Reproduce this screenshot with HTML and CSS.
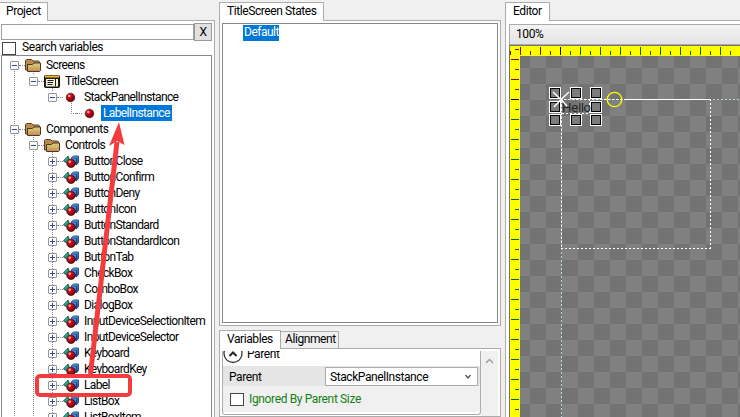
FILE: index.html
```html
<!DOCTYPE html>
<html lang="en">
<head>
<meta charset="utf-8">
<title>Project</title>
<link rel="stylesheet" href="styles.css">
</head>
<body>
<svg class="defs" width="0" height="0">
  <defs>
    <linearGradient id="fold" x1="0" y1="0" x2="0" y2="1"><stop offset="0" stop-color="#dccb7c"/><stop offset=".5" stop-color="#cdb866"/><stop offset=".6" stop-color="#d3a270"/><stop offset="1" stop-color="#c08f58"/></linearGradient>
    <radialGradient id="red" cx=".35" cy=".3" r=".75"><stop offset="0" stop-color="#ff8a8a"/><stop offset=".3" stop-color="#cb1016"/><stop offset="1" stop-color="#690008"/></radialGradient>
    <linearGradient id="blue" x1="0" y1="0" x2="1" y2="1"><stop offset="0" stop-color="#7cc4ff"/><stop offset="1" stop-color="#0b4bb0"/></linearGradient>
  </defs>
  <symbol id="folder" viewBox="0 0 16 16"><path d="M.5 13V3.500L1.500 2.500H6.500L8 4H13.500L14.500 5V13Z" fill="#b98b50" stroke="#5b4120"/><path d="M2.500 14.500V7.500H7.500L9 6H15.500V13.500L14.500 14.500Z" fill="url(#fold)" stroke="#4d371b"/></symbol>
  <symbol id="screen" viewBox="0 0 16 16"><rect x=".5" y="2.500" width="15" height="12" rx="1" fill="#222" stroke="#111"/><path d="M1 3.500H15" stroke="#f6b72d" stroke-width="2"/><rect x="2" y="6" width="12" height="7.500" fill="#f6f2dc"/><path d="M3.500 7.500H9.500M3.500 9.500H9M3.500 11.500H8.500M11.500 6V13.500" stroke="#222"/></symbol>
  <symbol id="ball" viewBox="0 0 16 16"><circle cx="7.500" cy="8.500" r="4.300" fill="url(#red)" stroke="#420006" stroke-width=".6"/><circle cx="6.300" cy="7" r="1" fill="#ffc4c4"/></symbol>
  <symbol id="shapes" viewBox="0 0 16 16"><path d="M.5 8L5 3L7 8L3 9.500Z" fill="#24a487" stroke="#064a42" stroke-width=".8"/><path d="M8.500 4.500L10.500 3H15.500V9.500L14 11.500H8.500Z" fill="url(#blue)" stroke="#082b70" stroke-width=".7"/><path d="M13.700 5V11M9 5H13.500" stroke="#0a3278" stroke-width=".7"/><circle cx="8" cy="10.300" r="4.300" fill="url(#red)" stroke="#420006" stroke-width=".6"/><circle cx="6.700" cy="8.800" r="1" fill="#ffc4c4"/></symbol>
  <symbol id="minus" viewBox="0 0 9 9"><rect x=".5" y=".5" width="8" height="8" rx=".5" fill="#fafafa" stroke="#969696"/><path d="M2 4.500H7" stroke="#304d9b"/></symbol>
  <symbol id="plus" viewBox="0 0 9 9"><rect x=".5" y=".5" width="8" height="8" rx=".5" fill="#fafafa" stroke="#969696"/><path d="M2 4.500H7M4.500 2V7" stroke="#304d9b"/></symbol>
</svg>
<main class="app">
  <section class="project">
    <div class="tabs"><div class="tab tab-project">Project</div></div>
    <div class="panel project-panel">
      <div class="search"><div class="field"></div><div class="clear">X</div></div>
      <div class="option"><i class="check"></i><span>Search variables</span></div>
      <div class="tree">
        <svg class="lines" width="72" height="361"><path d="M12.500 13V361M31.500 13V19M50.500 30V36M31.500 77V361M50.500 94V361M69.500 45V57"/></svg>
        <div class="row l0"><svg class="exp"><use href="#minus"/></svg><i></i><svg class="ico"><use href="#folder"/></svg><span>Screens</span></div>
        <div class="row l1"><svg class="exp"><use href="#minus"/></svg><i></i><svg class="ico"><use href="#screen"/></svg><span>TitleScreen</span></div>
        <div class="row l2"><svg class="exp"><use href="#minus"/></svg><i></i><svg class="ico"><use href="#ball"/></svg><span>StackPanelInstance</span></div>
        <div class="row l3"><b></b><i></i><svg class="ico"><use href="#ball"/></svg><span class="selected">LabelInstance</span></div>
        <div class="row l0"><svg class="exp"><use href="#minus"/></svg><i></i><svg class="ico"><use href="#folder"/></svg><span>Components</span></div>
        <div class="row l1"><svg class="exp"><use href="#minus"/></svg><i></i><svg class="ico"><use href="#folder"/></svg><span>Controls</span></div>
        <div class="row l2"><svg class="exp"><use href="#plus"/></svg><i></i><svg class="ico"><use href="#shapes"/></svg><span>ButtonClose</span></div>
        <div class="row l2"><svg class="exp"><use href="#plus"/></svg><i></i><svg class="ico"><use href="#shapes"/></svg><span>ButtonConfirm</span></div>
        <div class="row l2"><svg class="exp"><use href="#plus"/></svg><i></i><svg class="ico"><use href="#shapes"/></svg><span>ButtonDeny</span></div>
        <div class="row l2"><svg class="exp"><use href="#plus"/></svg><i></i><svg class="ico"><use href="#shapes"/></svg><span>ButtonIcon</span></div>
        <div class="row l2"><svg class="exp"><use href="#plus"/></svg><i></i><svg class="ico"><use href="#shapes"/></svg><span>ButtonStandard</span></div>
        <div class="row l2"><svg class="exp"><use href="#plus"/></svg><i></i><svg class="ico"><use href="#shapes"/></svg><span>ButtonStandardIcon</span></div>
        <div class="row l2"><svg class="exp"><use href="#plus"/></svg><i></i><svg class="ico"><use href="#shapes"/></svg><span>ButtonTab</span></div>
        <div class="row l2"><svg class="exp"><use href="#plus"/></svg><i></i><svg class="ico"><use href="#shapes"/></svg><span>CheckBox</span></div>
        <div class="row l2"><svg class="exp"><use href="#plus"/></svg><i></i><svg class="ico"><use href="#shapes"/></svg><span>ComboBox</span></div>
        <div class="row l2"><svg class="exp"><use href="#plus"/></svg><i></i><svg class="ico"><use href="#shapes"/></svg><span>DialogBox</span></div>
        <div class="row l2"><svg class="exp"><use href="#plus"/></svg><i></i><svg class="ico"><use href="#shapes"/></svg><span>InputDeviceSelectionItem</span></div>
        <div class="row l2"><svg class="exp"><use href="#plus"/></svg><i></i><svg class="ico"><use href="#shapes"/></svg><span>InputDeviceSelector</span></div>
        <div class="row l2"><svg class="exp"><use href="#plus"/></svg><i></i><svg class="ico"><use href="#shapes"/></svg><span>Keyboard</span></div>
        <div class="row l2"><svg class="exp"><use href="#plus"/></svg><i></i><svg class="ico"><use href="#shapes"/></svg><span>KeyboardKey</span></div>
        <div class="row l2"><svg class="exp"><use href="#plus"/></svg><i></i><svg class="ico"><use href="#shapes"/></svg><span>Label</span></div>
        <div class="row l2"><svg class="exp"><use href="#plus"/></svg><i></i><svg class="ico"><use href="#shapes"/></svg><span>ListBox</span></div>
        <div class="row l2"><svg class="exp"><use href="#plus"/></svg><i></i><svg class="ico"><use href="#shapes"/></svg><span>ListBoxItem</span></div>
      </div>
    </div>
  </section>
  <section class="middle">
    <div class="tabs"><div class="tab tab-states">TitleScreen States</div></div>
    <div class="panel states-panel"><div class="states"><span class="selected">Default</span></div></div>
    <div class="tabs lower-tabs"><div class="tab tab-variables">Variables</div><div class="tab tab-align">Alignment</div></div>
    <div class="panel variables-panel">
      <div class="group">
        <div class="group-title"><svg width="20" height="15"><circle cx="10" cy="2.500" r="9" fill="none" stroke="#333" stroke-width="1.300"/><path d="M6.500 5L10 1.500L13.500 5" fill="none" stroke="#222" stroke-width="2"/></svg><span>Parent</span></div>
        <div class="prop"><span>Parent</span><div class="combo"><span>StackPanelInstance</span><svg width="8" height="6"><path d="M1.500 1L4 4L6.500 1" fill="none" stroke="#555" stroke-width="1.300"/></svg></div></div>
        <div class="ignored"><i class="check"></i><span>Ignored By Parent Size</span></div>
      </div>
      <div class="scroll"><svg width="9" height="6"><path d="M1 5L4.500 1.500L8 5" fill="none" stroke="#999" stroke-width="1.300"/></svg></div>
    </div>
  </section>
  <section class="editor">
    <div class="tabs"><div class="tab tab-editor">Editor</div></div>
    <div class="panel editor-panel">
      <div class="toolbar">100%</div>
      <svg class="canvas" width="231" height="372" viewBox="509 45 231 372" shape-rendering="crispEdges">
        <defs>
          <pattern id="checker" x="530" y="52" width="32" height="32" patternUnits="userSpaceOnUse"><rect width="32" height="32" fill="#737373"/><path d="M0 0H16V16H0ZM16 16H32V32H16Z" fill="#808080"/></pattern>
          <pattern id="ticksX" x="520" y="46" width="20" height="10" patternUnits="userSpaceOnUse"><path d="M0 1H1V9H0ZM10 5H11V9H10Z" fill="#006400"/></pattern>
          <pattern id="ticksXr" x="520" y="46" width="20" height="10" patternUnits="userSpaceOnUse"><path d="M0 1H1V9H0ZM10 5H11V9H10Z" fill="#8b0000"/></pattern>
          <pattern id="ticksY" x="510" y="59" width="10" height="20" patternUnits="userSpaceOnUse"><path d="M1 0H9V1H1ZM5 10H9V11H5Z" fill="#006400"/></pattern>
          <pattern id="ticksYr" x="510" y="59" width="10" height="20" patternUnits="userSpaceOnUse"><path d="M1 0H9V1H1ZM5 10H9V11H5Z" fill="#8b0000"/></pattern>
          <g id="handle"><path d="M0 0H12V12H0Z" fill="#fff"/><path d="M1 1H11V11H1Z" fill="#000"/><path d="M2 2H10V10H2Z" fill="#7c7c7c"/></g>
        </defs>
        <rect x="509" y="45" width="231" height="372" fill="#737373"/>
        <rect x="520" y="56" width="220" height="361" fill="url(#checker)"/>
        <path d="M510 46H740V56H520V417H510Z" fill="#ff0"/>
        <rect x="510" y="46" width="50" height="10" fill="url(#ticksXr)"/><rect x="561" y="46" width="179" height="10" fill="url(#ticksX)"/><rect x="560" y="47" width="1" height="8"/>
        <rect x="510" y="47" width="10" height="52" fill="url(#ticksYr)"/><rect x="510" y="100" width="10" height="317" fill="url(#ticksY)"/><rect x="511" y="99" width="8" height="1"/>
        <g fill="none" stroke-dasharray="2 2"><path d="M561 99.500H740M561.500 100V417" stroke="#b0dbe5"/><path d="M564 99.500H632M711 248.500H561M710.500 99V249M561.500 101V248M562 113.500H590" stroke="#fff"/><path d="M589.500 99V113" stroke="#fff"/></g>
        <path d="M626 99.500H711" stroke="#fff"/>
        <use href="#handle" x="549" y="87"/><use href="#handle" x="570" y="87"/><use href="#handle" x="590" y="87"/>
        <use href="#handle" x="549" y="101"/><use href="#handle" x="590" y="101"/>
        <use href="#handle" x="549" y="114"/><use href="#handle" x="570" y="114"/><use href="#handle" x="590" y="114"/>
        <text x="562" y="112" class="hello">Hello</text>
        <path d="M553 92L561 99.500L569 92M554 107L561 99.500L567 106" stroke="#fff" stroke-width="1.400" fill="none" shape-rendering="auto"/>
        <circle cx="614.500" cy="99.500" r="7.200" fill="none" stroke="#ff0" stroke-width="1.300" shape-rendering="auto"/>
      </svg>
    </div>
  </section>
</main>
<svg class="annotation" width="220" height="417"><path d="M90.500 374L117 142" stroke="#f23c3e" stroke-width="5"/><path d="M119 122L109 146L117 141L124.500 145Z" fill="#f23c3e"/><rect x="37" y="376" width="93" height="19" rx="3" fill="none" stroke="#f23c3e" stroke-width="4"/></svg>
</body>
</html>
```
FILE: styles.css
```css
* { box-sizing: border-box; }
body { margin: 0; width: 740px; height: 417px; overflow: hidden; background: #f0f0f0; color: #000; font: 12px/16px Roboto, "Liberation Sans", sans-serif; letter-spacing: -.42px; }
.defs { position: absolute; }
.app { display: flex; height: 417px; gap: 4px; }
.project { width: 215px; }
.middle { width: 282px; }
.editor { width: 235px; }
.project, .middle, .editor { display: flex; flex-direction: column; flex: none; }
.tabs { height: 20px; padding-top: 2px; display: flex; flex: none; align-items: flex-end; }
.tab { height: 19px; margin-bottom: -1px; border: 1px solid #acacac; border-bottom: 0; background: #fff; white-space: nowrap; z-index: 1; line-height: 16px; padding-left: 6px; }
.tab-project { width: 48px; border-left: 0; }
.tab-states { width: 105px; padding-left: 7px; }
.tab-editor { width: 45px; padding-left: 7px; }
.panel { border: 1px solid #acacac; background: #fff; }
.project-panel { flex: 1; border-left: 0; border-bottom: 0; padding: 2px 2px 0 1px; }
.search { display: flex; height: 18px; align-items: center; }
.field { flex: 1; height: 16px; border: 1px solid #9e9e9e; }
.clear { width: 18px; height: 18px; border: 1px solid #999; background: #e1e1e1; text-align: center; }
.option { display: flex; height: 14px; gap: 6px; padding-left: 1px; align-items: center; }
.option span { position: relative; top: -1px; }
.check { display: block; width: 14px; height: 13px; border: 1px solid #444; background: #fff; flex: none; }
.tree { position: relative; height: 362px; border: 1px solid #828790; border-bottom: 0; padding-top: 1px; overflow: hidden; letter-spacing: -.63px; }
.lines { position: absolute; left: 0; top: 0; fill: none; stroke: #888; stroke-dasharray: 1 1; }
.row { height: 16px; display: flex; align-items: center; position: relative; white-space: nowrap; }
.l0 { padding-left: 8px; } .l1 { padding-left: 27px; } .l2 { padding-left: 46px; } .l3 { padding-left: 69px; }
.row i { width: 6px; border-top: 1px dotted #888; flex: none; }
.row b { width: 5px; border-top: 1px dotted #888; flex: none; }
.exp { width: 9px; height: 9px; flex: none; }
.ico { width: 16px; height: 16px; flex: none; }
.row span { padding-left: 5px; }
.selected { background: #0078d7; color: #fff; }
.row .selected { margin-left: 3px; padding: 0 2px; }
.states-panel { height: 306px; padding: 2px; flex: none; }
.states { height: 300px; border: 1px solid #828790; padding: 1px 0 0 20px; display: flex; align-items: flex-start; }
.states .selected { width: 36px; height: 16px; padding-left: 1px; line-height: 14px; letter-spacing: -.5px; }
.lower-tabs { height: 22px; padding-top: 4px; }
.tab-variables { width: 62px; padding-left: 7px; }
.tab-align { width: 59px; height: 17px; margin-left: -1px; margin-bottom: 0; padding-left: 4px; background: #f0f0f0; line-height: 15px; }
.variables-panel { height: 70px; padding: 2px 2px 0; display: flex; }
.group { width: 259px; height: 64px; border: 1px solid #acacac; border-top: 0; border-radius: 0 0 3px 3px; overflow: hidden; }
.group-title { height: 15px; display: flex; gap: 4px; overflow: hidden; }
.group-title svg { flex: none; }
.group-title span { line-height: 7px; }
.prop { height: 20px; background: #e5e5e5; display: flex; padding: 1px 2px 0 6px; justify-content: space-between; line-height: 20px; }
.combo { width: 153px; height: 19px; border: 1px solid #acacac; background: #fff; display: flex; justify-content: space-between; align-items: center; padding: 0 5px 0 4px; }
.ignored { height: 26px; background: #f0f0f0; display: flex; align-items: center; padding-left: 7px; gap: 5px; color: #148014; letter-spacing: -.36px; }
.scroll { width: 17px; background: #f0f0f0; padding: 1px 4px; }
.editor-panel { border-right: 0; border-bottom: 0; padding: 3px 0 0 3px; flex: 1; }
.toolbar { height: 21px; border: 1px solid #acacac; border-right: 0; background: linear-gradient(#f4f4f4, #e3e3e3); padding-left: 6px; line-height: 18px; }
.canvas { display: block; }
.hello { font: 13px "Liberation Sans", sans-serif; fill: #222; letter-spacing: -.2px; }
.annotation { position: absolute; left: 0; top: 0; z-index: 5; }
```
